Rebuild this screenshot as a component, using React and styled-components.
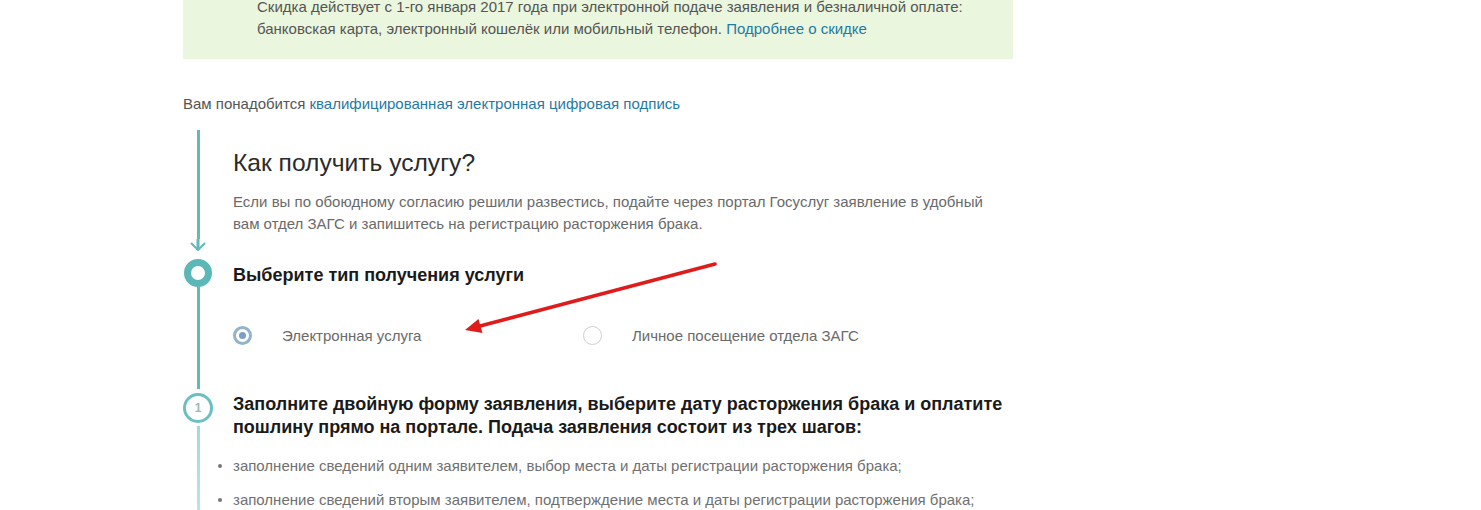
import React from 'react';
import styled, { createGlobalStyle } from 'styled-components';

const GlobalStyle = createGlobalStyle`
  html, body { margin: 0; padding: 0; background: #fff; }
  body {
    font-family: "Liberation Sans", Arial, sans-serif;
    color: #333;
    overflow: hidden;
  }
`;

const Page = styled.div`
  position: relative;
  display: flow-root;
  width: 830px;
  margin-left: 183px;
`;

const Notice = styled.div`
  background: #eaf6dd;
  margin-top: -4px;
  padding: 0 30px 19px 74px;
  font-size: 15px;
  line-height: 22px;
  color: #555;
`;

const Link = styled.a`
  color: #1f7aa6;
  text-decoration: none;
`;

const Signature = styled.p`
  margin: 35px 0 0;
  font-size: 15px;
  line-height: 20px;
  color: #555;
`;

const Timeline = styled.div`
  margin-top: 16px;
`;

const Row = styled.div`
  display: grid;
  grid-template-columns: 30px 1fr;
  column-gap: 20px;
`;

const Rail = styled.div`
  display: flex;
  flex-direction: column;
  align-items: center;
`;

const Line = styled.div`
  width: 3px;
  flex: 1;
  margin-top: ${p => p.$gapTop || 0}px;
  margin-bottom: ${p => p.$gapBottom || 0}px;
  background: ${p => (p.$faded ? 'linear-gradient(#a3d9d9, #cdeded)' : '#62b9b9')};
`;

const ArrowHead = styled.svg`
  display: block;
  margin-bottom: 8px;
  flex: none;
`;

const Dot = styled.div`
  flex: none;
  box-sizing: border-box;
  width: 28px;
  height: 28px;
  border-radius: 50%;
  border: 7px solid #5cb8b8;
  background: #fff;
`;

const StepCircle = styled.div`
  flex: none;
  box-sizing: border-box;
  width: 30px;
  height: 30px;
  border-radius: 50%;
  border: 3px solid #6cc0c0;
  display: flex;
  align-items: center;
  justify-content: center;
  font-size: 12px;
  font-weight: bold;
  color: #9ab8b8;
`;

const Content = styled.div`
  padding-top: ${p => p.$top || 0}px;
  padding-bottom: ${p => p.$bottom || 0}px;
`;

const Heading = styled.h2`
  margin: 0;
  font-size: 24.6px;
  line-height: 30px;
  font-weight: normal;
  color: #2b2b2b;
`;

const Lead = styled.p`
  margin: 13px 0 0;
  max-width: 765px;
  font-size: 15px;
  line-height: 22px;
  color: #6a6a6a;
`;

const StepTitle = styled.h3`
  margin: 0;
  font-size: 18px;
  line-height: 23px;
  font-weight: bold;
  color: #1a1a1a;
`;

const Options = styled.div`
  display: grid;
  grid-template-columns: 350px 350px;
  margin-top: 38px;
`;

const Option = styled.label`
  display: flex;
  align-items: center;
  gap: 30px;
  height: 20px;
  font-size: 15px;
  color: #6a6a6a;
`;

const Radio = styled.span`
  flex: none;
  box-sizing: border-box;
  width: 19px;
  height: 19px;
  border-radius: 50%;
  border: ${p => (p.$checked ? '3px solid #93b3cb' : '1px solid #cfcfcf')};
  display: flex;
  align-items: center;
  justify-content: center;
  &::after {
    content: '';
    display: ${p => (p.$checked ? 'block' : 'none')};
    width: 7px;
    height: 7px;
    border-radius: 50%;
    background: #7b9fc2;
  }
`;

const Bullets = styled.ul`
  list-style: none;
  margin: 16px 0 0;
  padding: 0;
`;

const Bullet = styled.li`
  position: relative;
  font-size: 15px;
  line-height: 22px;
  color: #707070;
  & + & { margin-top: 12px; }
  &::before {
    content: '';
    position: absolute;
    left: -15px;
    top: 9px;
    width: 4px;
    height: 4px;
    border-radius: 50%;
    background: #777;
  }
`;

const Annotation = styled.svg`
  position: absolute;
  left: 275px;
  top: 258px;
  pointer-events: none;
`;

export default function App() {
  return (
    <>
      <GlobalStyle />
      <Page>
        <Notice>
          Скидка действует с 1-го января 2017 года при электронной подаче заявления и безналичной оплате:
          банковская карта, электронный кошелёк или мобильный телефон. <Link href="#">Подробнее о скидке</Link>
        </Notice>

        <Signature>
          Вам понадобится <Link href="#">квалифицированная электронная цифровая подпись</Link>
        </Signature>

        <Timeline>
          <Row>
            <Rail>
              <Line />
              <ArrowHead width="18" height="12" viewBox="0 0 18 12">
                <path d="M9 0 V11" stroke="#62b9b9" strokeWidth="3" fill="none" />
                <path d="M2 4 L9 11 L16 4" stroke="#62b9b9" strokeWidth="2" fill="none" />
              </ArrowHead>
            </Rail>
            <Content $top={18} $bottom={24}>
              <Heading>Как получить услугу?</Heading>
              <Lead>
                Если вы по обоюдному согласию решили развестись, подайте через портал Госуслуг заявление в удобный
                вам отдел ЗАГС и запишитесь на регистрацию расторжения брака.
              </Lead>
            </Content>
          </Row>

          <Row>
            <Rail>
              <Dot />
              <Line $gapBottom={4} />
            </Rail>
            <Content $top={5} $bottom={48}>
              <StepTitle>Выберите тип получения услуги</StepTitle>
              <Options>
                <Option>
                  <Radio $checked />
                  Электронная услуга
                </Option>
                <Option>
                  <Radio />
                  Личное посещение отдела ЗАГС
                </Option>
              </Options>
            </Content>
          </Row>

          <Row>
            <Rail>
              <StepCircle>1</StepCircle>
              <Line $faded $gapTop={3} />
            </Rail>
            <Content $top={0} $bottom={40}>
              <StepTitle>
                Заполните двойную форму заявления, выберите дату расторжения брака и оплатите пошлину прямо на
                портале. Подача заявления состоит из трех шагов:
              </StepTitle>
              <Bullets>
                <Bullet>заполнение сведений одним заявителем, выбор места и даты регистрации расторжения брака;</Bullet>
                <Bullet>заполнение сведений вторым заявителем, подтверждение места и даты регистрации расторжения брака;</Bullet>
                <Bullet>оплата государственной пошлины.</Bullet>
              </Bullets>
            </Content>
          </Row>
        </Timeline>

        <Annotation width="265" height="80" viewBox="0 0 265 80">
          <line x1="257" y1="6" x2="22" y2="68" stroke="#e01b1b" strokeWidth="3.5" strokeLinecap="round" />
          <polygon points="7,72 24.5,75 20.5,61" fill="#e01b1b" />
        </Annotation>
      </Page>
    </>
  );
}
